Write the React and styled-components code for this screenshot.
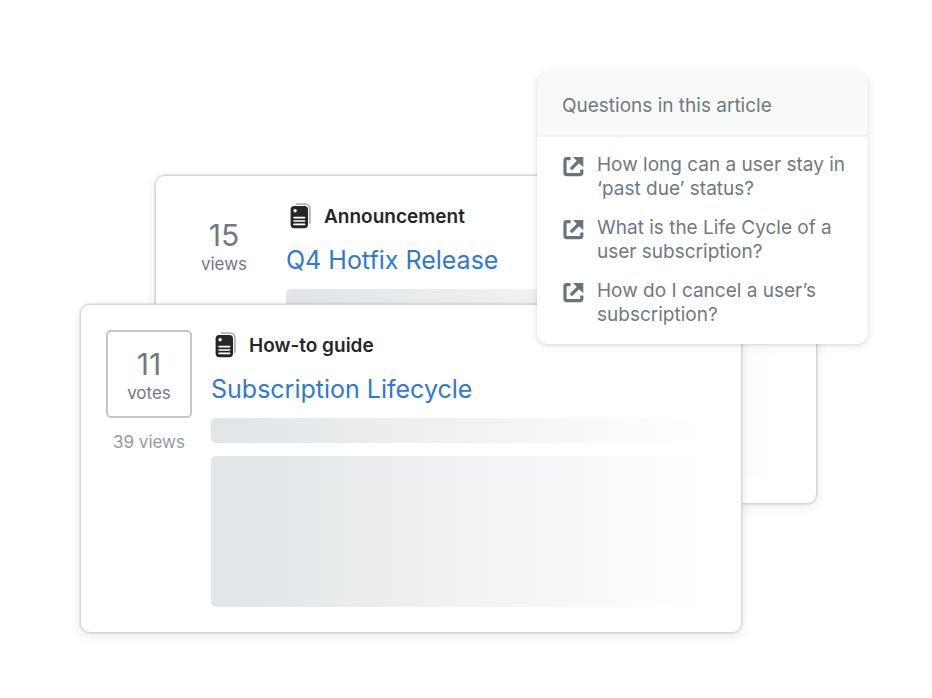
import React from "react";
import styled, { createGlobalStyle, css } from "styled-components";

const GlobalStyle = createGlobalStyle`
  *, *::before, *::after { box-sizing: border-box; }
  body {
    margin: 0;
    background: #ffffff;
    color: #707982;
    font-family: Inter, "Liberation Sans", sans-serif;
    -webkit-font-smoothing: antialiased;
  }
`;

const Stage = styled.main`
  display: grid;
  grid-template-columns: 75px minmax(0, 382fr) minmax(0, 205fr) 75px 51px;
  grid-template-rows: 103px 129px auto;
  align-items: start;
  padding: 72px 64px 64px 80px;
`;

const Card = styled.article`
  display: grid;
  grid-template-columns: 86px minmax(0, 1fr);
  column-gap: 19px;
  align-items: start;
  padding: 25px;
  background: #ffffff;
  border: 1px solid #d3d7da;
  border-radius: 10px;
  box-shadow: 0 0 1px 1px rgba(12, 13, 14, 0.07), 0 3px 12px rgba(12, 13, 14, 0.09);
  ${({ $layer }) =>
    $layer === "front"
      ? css`
          grid-area: 3 / 1 / 4 / 4;
          z-index: 2;
        `
      : css`
          grid-area: 2 / 2 / 4 / 5;
          z-index: 1;
        `}
`;

const Stats = styled.div`
  display: flex;
  flex-direction: column;
  align-items: center;
  gap: 14px;
`;

const StatBox = styled.div`
  display: flex;
  flex-direction: column;
  align-items: center;
  justify-content: center;
  width: 100%;
  height: 88px;
  padding-top: 5px;
  border: 2px solid ${({ $outlined }) => ($outlined ? "#c3c7cb" : "transparent")};
  border-radius: 5px;
`;

const StatValue = styled.span`
  font-size: 30px;
  line-height: 32px;
`;

const StatLabel = styled.span`
  font-size: 17px;
  line-height: 26px;
`;

const Views = styled.span`
  color: #9199a1;
  font-size: 17px;
  line-height: 20px;
`;

const Body = styled.div`
  display: flex;
  flex-direction: column;
`;

const Kind = styled.div`
  display: flex;
  align-items: center;
  gap: 12px;
  height: 30px;
  padding-left: 4px;
  color: #242729;
  font-size: 19px;
  font-weight: 600;
  line-height: 28px;
`;

const KindLabel = styled.span`
  padding-top: 2px;
`;

const Title = styled.a`
  margin-top: 11px;
  color: #2f79ce;
  font-size: 25px;
  line-height: 36px;
  text-decoration: none;
`;

const Placeholder = styled.div`
  height: ${({ $tall }) => ($tall ? "151px" : "25px")};
  margin-top: ${({ $tall }) => ($tall ? "13px" : "11px")};
  border-radius: 5px;
  background: linear-gradient(90deg, #e1e5e8 0%, #ebedee 33%, #f3f5f6 62%, #fafbfb 82%, #ffffff 98%);
`;

const Panel = styled.aside`
  grid-area: 1 / 3 / 4 / 6;
  z-index: 3;
  overflow: hidden;
  background: #ffffff;
  border-radius: 10px;
  box-shadow: 0 1px 3px rgba(12, 13, 14, 0.1), 0 2px 10px rgba(12, 13, 14, 0.08);
`;

const PanelTitle = styled.h2`
  margin: 0;
  padding: 20px 25px 15px;
  background: #f8f9f9;
  border-bottom: 2px solid #f1f2f3;
  font-size: 19px;
  font-weight: 400;
  line-height: 28px;
`;

const Questions = styled.ul`
  display: flex;
  flex-direction: column;
  gap: 15px;
  margin: 0;
  padding: 16px 20px 17px 25px;
  list-style: none;
`;

const Question = styled.a`
  display: flex;
  align-items: flex-start;
  gap: 12px;
  color: #707982;
  font-size: 19px;
  line-height: 24px;
  text-decoration: none;
`;

const Icon = styled.svg`
  display: block;
  flex: none;
`;

const ArticleIcon = () => (
  <Icon width="22" height="26" viewBox="0 0 22 26" aria-hidden="true">
    <path
      d="M6.5 1.2H15.5a4.3 4.3 0 0 1 4.3 4.3v14.5"
      fill="none"
      stroke="#adb1b4"
      strokeWidth="1.8"
      strokeLinecap="round"
    />
    <rect x="0.6" y="3" width="17.4" height="22.2" rx="3.6" fill="#242729" />
    <circle cx="5.1" cy="7.7" r="1.7" fill="#ffffff" />
    <path d="M4 14.6h10.6M4 18h10.6M4 21.4h10.6" stroke="#ffffff" strokeWidth="1.6" strokeLinecap="round" />
  </Icon>
);

const ExternalIcon = () => (
  <Icon width="23" height="27" viewBox="0 0 23 27" aria-hidden="true">
    <g fill="none" stroke="#6a737c" strokeWidth="3.2">
      <path d="M8.6 5.6H4.8A1.8 1.8 0 0 0 3 7.4v12.4a1.8 1.8 0 0 0 1.8 1.8h13.2a1.8 1.8 0 0 0 1.8-1.8V16.4" />
      <path d="M8.8 16.2L17 8" />
    </g>
    <path d="M11 4h10.3v10.3l-3.4-3.4-3.5-3.5z" fill="#6a737c" />
  </Icon>
);

const questions = [
  ["How long can a user stay in", "‘past due’ status?"],
  ["What is the Life Cycle of a", "user subscription?"],
  ["How do I cancel a user’s", "subscription?"],
];

const ArticleCard = ({ layer, value, unit, views, kind, title }) => (
  <Card $layer={layer}>
    <Stats>
      <StatBox $outlined={layer === "front"}>
        <StatValue>{value}</StatValue>
        <StatLabel>{unit}</StatLabel>
      </StatBox>
      {views && <Views>{views}</Views>}
    </Stats>
    <Body>
      <Kind>
        <ArticleIcon />
        <KindLabel>{kind}</KindLabel>
      </Kind>
      <Title href="#">{title}</Title>
      <Placeholder />
      <Placeholder $tall />
    </Body>
  </Card>
);

export default function App() {
  return (
    <>
      <GlobalStyle />
      <Stage>
        <ArticleCard layer="back" value="15" unit="views" kind="Announcement" title="Q4 Hotfix Release" />
        <ArticleCard
          layer="front"
          value="11"
          unit="votes"
          views="39 views"
          kind="How-to guide"
          title="Subscription Lifecycle"
        />
        <Panel>
          <PanelTitle>Questions in this article</PanelTitle>
          <Questions>
            {questions.map(([first, second]) => (
              <li key={first}>
                <Question href="#">
                  <ExternalIcon />
                  <span>
                    {first}
                    <br />
                    {second}
                  </span>
                </Question>
              </li>
            ))}
          </Questions>
        </Panel>
      </Stage>
    </>
  );
}
